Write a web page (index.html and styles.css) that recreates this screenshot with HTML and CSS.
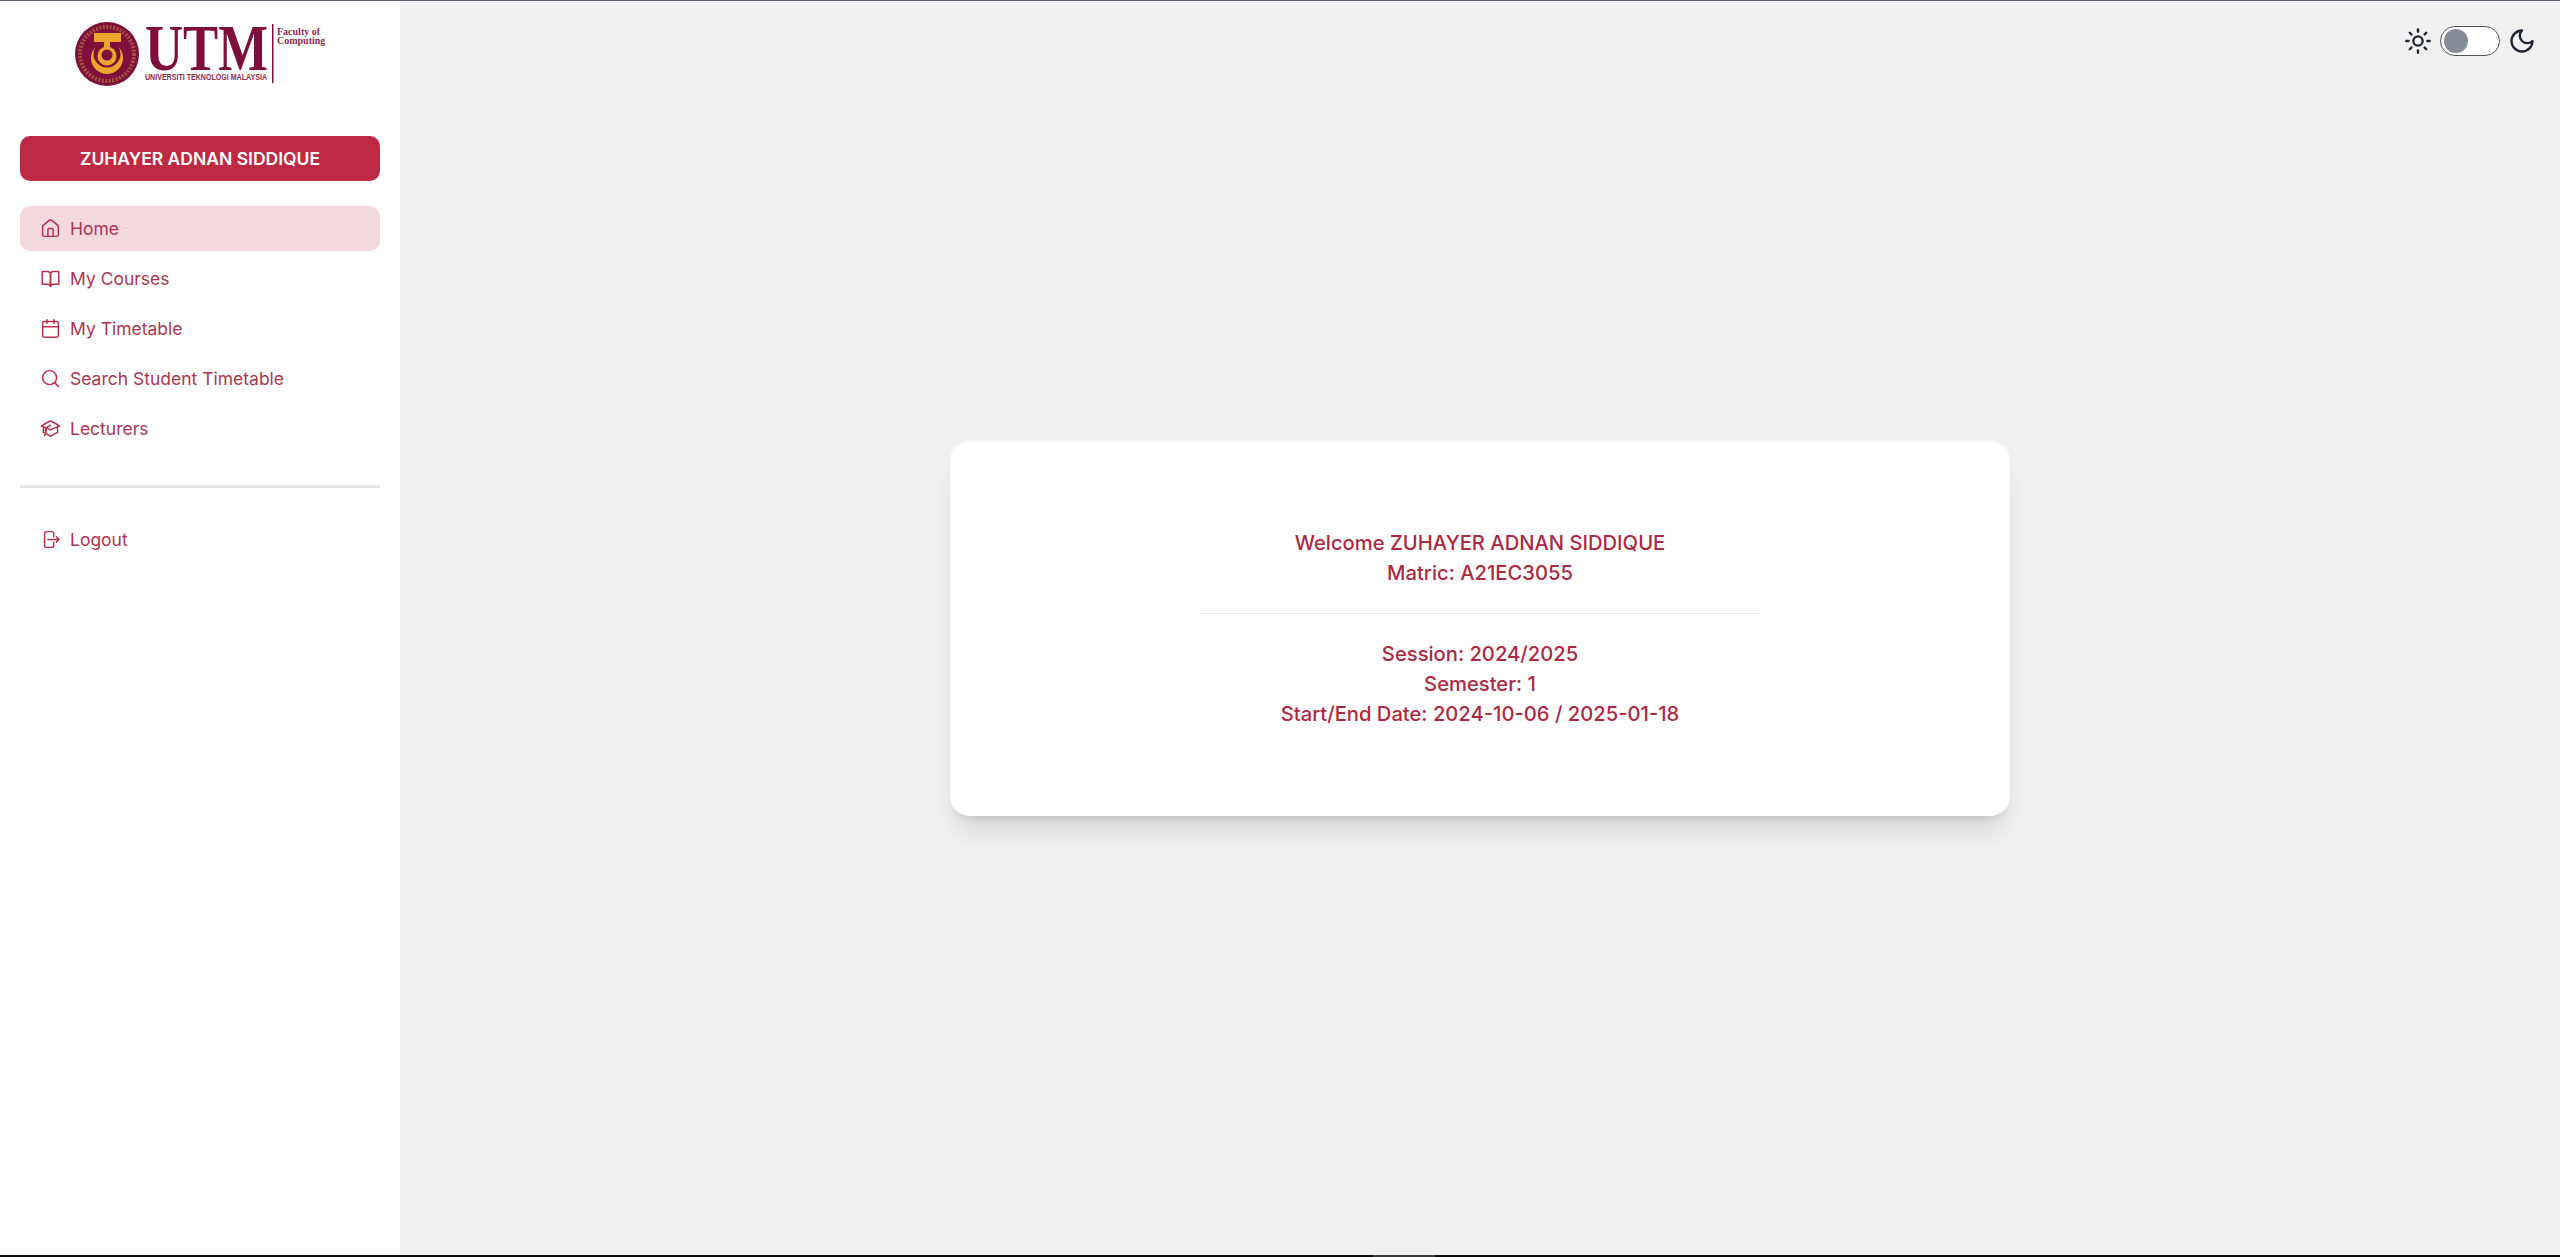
FILE: index.html
```html
<!DOCTYPE html>
<html lang="en">
<head>
    <meta charset="UTF-8">
    <meta name="viewport" content="width=device-width, initial-scale=1.0">
    <title>Home</title>
    <link rel="stylesheet" href="styles.css">
</head>
<body>
    <div class="top-line"></div>
    <div class="app">
        <aside class="sidebar">
            <div class="logo">
                <svg class="logo-img" viewBox="0 0 250 66" width="250" height="66">
                    <circle cx="32" cy="33" r="32" fill="#7d0f3a"/>
                    <circle cx="32" cy="33" r="27" fill="none" stroke="#a5523f" stroke-width="4" stroke-dasharray="2 1.5"/>
                    <circle cx="32" cy="37" r="16" fill="#eda52f"/>
                    <circle cx="32" cy="33" r="13.5" fill="#7d0f3a"/>
                    <rect x="19" y="12" width="27" height="9" fill="#eda52f"/>
                    <rect x="29" y="21" width="6" height="6" fill="#eda52f"/>
                    <circle cx="32" cy="35" r="9.5" fill="#eda52f"/>
                    <circle cx="32" cy="34" r="5.5" fill="#7d0f3a"/>
                    <text x="70" y="49" class="logo-utm" textLength="123" lengthAdjust="spacingAndGlyphs">UTM</text>
                    <text x="70" y="59" class="logo-uni" textLength="122" lengthAdjust="spacingAndGlyphs">UNIVERSITI TEKNOLOGI MALAYSIA</text>
                    <rect x="197" y="3" width="1.5" height="59" fill="#7d0f3a"/>
                    <text x="202" y="14" class="logo-fac">Faculty of</text>
                    <text x="202" y="23" class="logo-fac">Computing</text>
                </svg>
            </div>
            <div class="user-name">ZUHAYER ADNAN SIDDIQUE</div>
            <nav class="menu">
                <a class="menu-item active" href="#">
                    <svg class="icon" viewBox="0 0 24 24"><path d="M15 21v-8a1 1 0 0 0-1-1h-4a1 1 0 0 0-1 1v8"/><path d="M3 10a2 2 0 0 1 .709-1.528l7-5.999a2 2 0 0 1 2.582 0l7 5.999A2 2 0 0 1 21 10v9a2 2 0 0 1-2 2H5a2 2 0 0 1-2-2z"/></svg>
                    Home
                </a>
                <a class="menu-item" href="#">
                    <svg class="icon" viewBox="0 0 24 24"><path d="M2.500 4h6a3.500 3.500 0 0 1 3.500 3.500V21a3 3 0 0 0-3-2.500H2.500z"/><path d="M21.500 4h-6A3.500 3.500 0 0 0 12 7.500V21a3 3 0 0 1 3-2.500h6.500z"/></svg>
                    My Courses
                </a>
                <a class="menu-item" href="#">
                    <svg class="icon" viewBox="0 0 24 24"><path d="M8 2v4"/><path d="M16 2v4"/><rect x="3" y="4" width="18" height="18" rx="2"/><path d="M3 10h18"/></svg>
                    My Timetable
                </a>
                <a class="menu-item" href="#">
                    <svg class="icon" viewBox="0 0 24 24"><circle cx="11" cy="11" r="8"/><path d="m21 21-4.300-4.300"/></svg>
                    Search Student Timetable
                </a>
                <a class="menu-item" href="#">
                    <svg class="icon" viewBox="0 0 24 24"><path d="M4.260 10.147a60.438 60.438 0 0 0-.491 6.347A48.620 48.620 0 0 1 12 20.904a48.620 48.620 0 0 1 8.232-4.410 60.460 60.460 0 0 0-.491-6.347m-15.482 0a50.636 50.636 0 0 0-2.658-.813A59.906 59.906 0 0 1 12 3.493a59.903 59.903 0 0 1 10.399 5.840c-.896.248-1.783.520-2.658.814m-15.482 0A50.717 50.717 0 0 1 12 13.489a50.702 50.702 0 0 1 7.740-3.342M6.750 15a.750.750 0 1 0 0-1.500.750.750 0 0 0 0 1.500Zm0 0v-3.675A55.378 55.378 0 0 1 12 8.443m-7.007 11.550A5.981 5.981 0 0 0 6.750 15.750v-1.500"/></svg>
                    Lecturers
                </a>
            </nav>
            <hr class="menu-divider">
            <nav class="menu">
                <a class="menu-item" href="#">
                    <svg class="icon" viewBox="0 0 24 24"><path d="M15.750 9V5.250A2.250 2.250 0 0 0 13.500 3h-6a2.250 2.250 0 0 0-2.250 2.250v13.500A2.250 2.250 0 0 0 7.500 21h6a2.250 2.250 0 0 0 2.250-2.250V15m3 0 3-3m0 0-3-3m3 3H9"/></svg>
                    Logout
                </a>
            </nav>
        </aside>
        <main class="content">
            <div class="theme-switch">
                <svg class="theme-icon" viewBox="0 0 24 24"><circle cx="12" cy="12" r="4"/><path d="M12 2v2"/><path d="M12 20v2"/><path d="m4.930 4.930 1.410 1.410"/><path d="m17.660 17.660 1.410 1.410"/><path d="M2 12h2"/><path d="M20 12h2"/><path d="m6.340 17.660-1.410 1.410"/><path d="m19.070 4.930-1.410 1.410"/></svg>
                <span class="toggle"><span class="toggle-knob"></span></span>
                <svg class="theme-icon" viewBox="0 0 24 24"><path d="M12 3a6 6 0 0 0 9 9 9 9 0 1 1-9-9Z"/></svg>
            </div>
            <section class="card">
                <p>Welcome ZUHAYER ADNAN SIDDIQUE</p>
                <p>Matric: A21EC3055</p>
                <hr class="card-divider">
                <p>Session: 2024/2025</p>
                <p>Semester: 1</p>
                <p>Start/End Date: 2024-10-06 / 2025-01-18</p>
            </section>
        </main>
    </div>
    <div class="bottom-line"><span class="bottom-tab"></span></div>
</body>
</html>
```
FILE: styles.css
```css
* {
    box-sizing: border-box;
}
html, body {
    height: 100%;
}
body {
    margin: 0;
    display: flex;
    flex-direction: column;
    font-family: Inter, "Liberation Sans", sans-serif;
    background-color: #f1f1f1;
    overflow: hidden;
}
.top-line {
    height: 1px;
    background-color: #5d6071;
}
.bottom-line {
    height: 2px;
    background-color: #0b0d10;
    display: flex;
    padding-left: 1373px;
}
.bottom-tab {
    width: 62px;
    background-color: #3a3a3a;
}
.app {
    flex: 1;
    display: flex;
    min-height: 0;
}
.sidebar {
    width: 400px;
    background-color: #fff;
    padding: 0 20px;
    flex-shrink: 0;
}
.logo {
    display: flex;
    justify-content: center;
    padding-top: 20px;
    height: 135px;
}
.logo-img {
    overflow: visible;
}
.logo-utm {
    font-family: "Liberation Serif", serif;
    font-weight: bold;
    font-size: 66px;
    fill: #7d0f3a;
}
.logo-uni {
    font-family: "Liberation Sans", sans-serif;
    font-weight: bold;
    font-size: 9.5px;
    fill: #8c2a50;
}
.logo-fac {
    font-family: "Liberation Serif", serif;
    font-weight: bold;
    font-size: 10px;
    fill: #8f2a52;
}
.user-name {
    height: 45px;
    display: flex;
    align-items: center;
    justify-content: center;
    background-color: #bc2b43;
    color: #fff;
    font-weight: 600;
    font-size: 17.5px;
    border-radius: 10px;
}
.menu {
    display: flex;
    flex-direction: column;
    gap: 5px;
}
.sidebar > .menu:first-of-type {
    margin-top: 25px;
}
.menu-item {
    height: 45px;
    display: flex;
    align-items: center;
    gap: 9px;
    padding: 0 20px;
    color: #ac3650;
    font-size: 17.5px;
    text-decoration: none;
    border-radius: 10px;
}
.menu-item.active {
    background-color: #f4d9de;
}
.icon {
    width: 21px;
    height: 21px;
    fill: none;
    stroke: #b8304a;
    stroke-width: 1.7;
    stroke-linecap: round;
    stroke-linejoin: round;
    flex-shrink: 0;
}
.menu-divider {
    margin: 34px 0 29px;
    border: 0;
    height: 3px;
    background-color: #e5e5e6;
}
.content {
    flex: 1;
    display: grid;
    place-items: center;
}
.content > * {
    grid-area: 1 / 1;
}
.theme-switch {
    justify-self: end;
    align-self: start;
    display: flex;
    align-items: center;
    gap: 8px;
    margin: 25px 24px 0 0;
}
.theme-icon {
    width: 28px;
    height: 28px;
    fill: none;
    stroke: #1f2430;
    stroke-width: 2;
    stroke-linecap: round;
    stroke-linejoin: round;
}
.toggle {
    width: 60px;
    height: 30px;
    display: flex;
    align-items: center;
    padding-left: 3px;
    background-color: #fff;
    border: 1px solid #50535c;
    border-radius: 15px;
}
.toggle-knob {
    width: 24px;
    height: 24px;
    background-color: #878c95;
    border-radius: 50%;
}
.card {
    width: 1060px;
    height: 375px;
    display: flex;
    flex-direction: column;
    align-items: center;
    justify-content: center;
    background-color: #fff;
    border-radius: 20px;
    box-shadow: 0 20px 25px -5px rgba(0, 0, 0, 0.1), 0 8px 10px -6px rgba(0, 0, 0, 0.1);
    color: #ab2a42;
    font-size: 20.2px;
    font-weight: 500;
    line-height: 30px;
}
.card p {
    margin: 0;
}
.card-divider {
    width: 560px;
    margin: 25px 0;
    border: 0;
    height: 1px;
    background-color: #e8e8e9;
}
```
